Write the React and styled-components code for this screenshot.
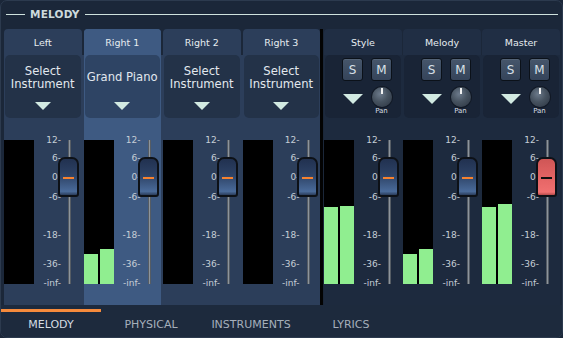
import React from 'react';
import styled, { createGlobalStyle } from 'styled-components';

const GlobalStyle = createGlobalStyle`
  html, body { margin: 0; padding: 0; background: #1b2739; }
  body { font-family: "DejaVu Sans", Verdana, sans-serif; }
  #root { width: 563px; height: 338px; }
`;

const Frame = styled.div`
  box-sizing: border-box;
  width: 563px;
  height: 338px;
  display: flex;
  flex-direction: column;
  background: #1b2739;
  border: 1px solid #2c3a4e;
  border-radius: 7px;
  overflow: hidden;
`;

const TitleBar = styled.div`
  height: 28px;
  box-sizing: border-box;
  padding: 0 4px 2px 5px;
  display: flex;
  align-items: center;
  gap: 5px;
`;

const Rule = styled.div`
  height: 1px;
  background: #cfe2de;
  ${(p) => (p.$grow ? 'flex: 1;' : 'width: 19px;')}
`;

const TitleText = styled.span`
  font-weight: bold;
  font-size: 10.5px;
  letter-spacing: 0.2px;
  color: #cddadd;
`;

const Mixer = styled.div`
  display: flex;
  height: 276px;
  padding-left: 3px;
`;

const InstGroup = styled.div`
  width: 316px;
  display: grid;
  grid-template-columns: repeat(4, 1fr);
  column-gap: 2px;
  background: linear-gradient(to bottom, transparent 26px, #2c3e5a 26px);
`;

const BusGroup = styled.div`
  width: 236px;
  display: grid;
  grid-template-columns: repeat(3, 1fr);
  column-gap: 1px;
  background: linear-gradient(to bottom, transparent 26px, #1d2a3e 26px);
`;

const Divider = styled.div`
  width: 3px;
  background: #030303;
  margin-right: 1px;
`;

const Channel = styled.div`
  display: flex;
  flex-direction: column;
  min-width: 0;
  background: ${(p) => p.$body};
  border-radius: 4px 4px 0 0;
`;

const ChannelLabel = styled.div`
  height: 26px;
  display: flex;
  align-items: center;
  justify-content: center;
  background: ${(p) => p.$bg};
  border-radius: 4px 4px 0 0;
  font-size: 9.5px;
  color: #e6ecf0;
`;

const SelectBox = styled.div`
  height: 63px;
  margin: 0 1px;
  box-sizing: border-box;
  background: ${(p) => p.$bg};
  border-radius: 5px;
  display: flex;
  flex-direction: column;
  align-items: center;
  padding-top: 8px;
`;

const SelectText = styled.div`
  height: 29px;
  display: flex;
  align-items: center;
  justify-content: center;
  text-align: center;
  font-size: 11.6px;
  line-height: 13px;
  color: #e2e8ee;
`;

const Caret = styled.div`
  width: 0;
  height: 0;
  border-left: ${(p) => p.$w}px solid transparent;
  border-right: ${(p) => p.$w}px solid transparent;
  border-top: ${(p) => p.$h}px solid #d2eae2;
  margin-top: ${(p) => p.$top}px;
  justify-self: center;
`;

const BusBox = styled.div`
  height: 63px;
  margin: 0 1px;
  box-sizing: border-box;
  background: #192436;
  border-radius: 5px;
  display: grid;
  grid-template-columns: 21px 21px;
  column-gap: 8px;
  row-gap: 6px;
  padding: 3px 0 0 17px;
  align-content: start;
  align-items: start;
`;

const SoloMute = styled.div`
  width: 21px;
  height: 23px;
  box-sizing: border-box;
  border: 1px solid #0b1119;
  border-radius: 3px;
  background: linear-gradient(#46566b, #35445a);
  box-shadow: inset 0 1px 0 rgba(255, 255, 255, 0.08);
  display: flex;
  align-items: center;
  justify-content: center;
  font-size: 12px;
  color: #d8e0e8;
`;

const KnobCell = styled.div`
  display: flex;
  flex-direction: column;
  align-items: center;
`;

const Knob = styled.div`
  position: relative;
  width: 20px;
  height: 20px;
  border-radius: 50%;
  background: radial-gradient(circle at 40% 35%, #6c7a8b 0%, #46525f 45%, #2b3441 100%);
  box-shadow: 0 0 0 1px rgba(10, 14, 20, 0.5);
`;

const KnobTick = styled.div`
  position: absolute;
  left: 9px;
  top: 1px;
  width: 2px;
  height: 6px;
  background: #f2f2f2;
`;

const KnobLabel = styled.div`
  font-size: 7px;
  line-height: 8px;
  color: #d8dee4;
`;

const Strip = styled.div`
  flex: 1;
  display: flex;
  padding-top: 22px;
`;

const Meter = styled.div`
  width: 30px;
  height: 144px;
  flex-shrink: 0;
  background: #000;
  display: flex;
  align-items: flex-end;
  gap: 2px;
`;

const MeterBar = styled.div`
  flex: 1;
  background: #90ee90;
`;

const Scale = styled.div`
  position: relative;
  width: 27px;
  height: 144px;
  flex-shrink: 0;
`;

const ScaleMark = styled.span`
  position: absolute;
  right: 0;
  top: ${(p) => p.$y}px;
  transform: translateY(-50%);
  font-size: 9px;
  line-height: 10px;
  color: #c6ced6;
  white-space: nowrap;
`;

const Fader = styled.div`
  position: relative;
  width: 21px;
  height: 144px;
  margin-left: -3px;
  flex-shrink: 0;
`;

const Track = styled.div`
  position: absolute;
  left: 10px;
  top: 0;
  bottom: 0;
  width: 3px;
  background: linear-gradient(to right, #3a4048, #8c949c, #3a4048);
`;

const Handle = styled.div`
  position: absolute;
  left: 0;
  top: 17px;
  width: 21px;
  height: 40px;
  box-sizing: border-box;
  border: 2px solid #0d1117;
  border-radius: 7px 7px 3px 3px;
  background: ${(p) =>
    p.$red
      ? 'linear-gradient(#cf5656 0%, #e46464 50%, #f07070 92%, #b44a4a 100%)'
      : 'linear-gradient(#213150 0%, #2d4265 45%, #4a6b9a 90%, #2a3c5a 100%)'};
`;

const HandleLine = styled.div`
  position: absolute;
  left: 3px;
  right: 3px;
  top: 18px;
  height: 2px;
  background: ${(p) => (p.$red ? '#111' : '#f7822f')};
`;

const TabBar = styled.div`
  display: flex;
  height: 32px;
  box-sizing: border-box;
  padding-top: 4px;
  background: #1d2a3d;
`;

const Tab = styled.div`
  width: 100px;
  box-sizing: border-box;
  border-top: 3px solid ${(p) => (p.$active ? '#f58a3c' : 'transparent')};
  text-align: center;
  font-size: 11px;
  line-height: 25px;
  color: ${(p) => (p.$active ? '#d4dbe2' : '#a5afbb')};
`;

const MARKS = [
  ['12-', 0],
  ['6-', 18],
  ['0-', 37],
  ['-6-', 57],
  ['-18-', 95],
  ['-36-', 124],
  ['-inf-', 143],
];

const THEMES = {
  inst: { header: '#2c3e5a', box: '#233248', body: 'transparent' },
  active: { header: '#3e5a82', box: '#2e4464', body: '#3e5a82' },
  bus: { header: '#202e44', box: '#192436', body: 'transparent' },
};

function ChannelStrip({ levels, red }) {
  return (
    <Strip>
      <Meter>
        {levels.map((h, i) => (
          <MeterBar key={i} style={{ height: h }} />
        ))}
      </Meter>
      <Scale>
        {MARKS.map(([t, y]) => (
          <ScaleMark key={t} $y={y}>
            {t}
          </ScaleMark>
        ))}
      </Scale>
      <Fader>
        <Track />
        <Handle $red={red}>
          <HandleLine $red={red} />
        </Handle>
      </Fader>
    </Strip>
  );
}

function InstChannel({ name, instrument, active, levels }) {
  const t = active ? THEMES.active : THEMES.inst;
  return (
    <Channel $body={t.body}>
      <ChannelLabel $bg={t.header}>{name}</ChannelLabel>
      <SelectBox $bg={t.box}>
        <SelectText>{instrument}</SelectText>
        <Caret $w={8} $h={8} $top={10} />
      </SelectBox>
      <ChannelStrip levels={levels} />
    </Channel>
  );
}

function BusChannel({ name, levels, red }) {
  const t = THEMES.bus;
  return (
    <Channel $body={t.body}>
      <ChannelLabel $bg={t.header}>{name}</ChannelLabel>
      <BusBox>
        <SoloMute>S</SoloMute>
        <SoloMute>M</SoloMute>
        <Caret $w={10} $h={10} $top={7} />
        <KnobCell>
          <Knob>
            <KnobTick />
          </Knob>
          <KnobLabel>Pan</KnobLabel>
        </KnobCell>
      </BusBox>
      <ChannelStrip levels={levels} red={red} />
    </Channel>
  );
}

const SELECT = (
  <>
    Select
    <br />
    Instrument
  </>
);

export default function App() {
  return (
    <>
      <GlobalStyle />
      <Frame>
        <TitleBar>
          <Rule />
          <TitleText>MELODY</TitleText>
          <Rule $grow />
        </TitleBar>
        <Mixer>
          <InstGroup>
            <InstChannel name="Left" instrument={SELECT} levels={[0, 0]} />
            <InstChannel name="Right 1" instrument="Grand Piano" active levels={[30, 35]} />
            <InstChannel name="Right 2" instrument={SELECT} levels={[0, 0]} />
            <InstChannel name="Right 3" instrument={SELECT} levels={[0, 0]} />
          </InstGroup>
          <Divider />
          <BusGroup>
            <BusChannel name="Style" levels={[77, 78]} />
            <BusChannel name="Melody" levels={[30, 35]} />
            <BusChannel name="Master" levels={[77, 80]} red />
          </BusGroup>
        </Mixer>
        <TabBar>
          <Tab $active>MELODY</Tab>
          <Tab>PHYSICAL</Tab>
          <Tab>INSTRUMENTS</Tab>
          <Tab>LYRICS</Tab>
        </TabBar>
      </Frame>
    </>
  );
}
